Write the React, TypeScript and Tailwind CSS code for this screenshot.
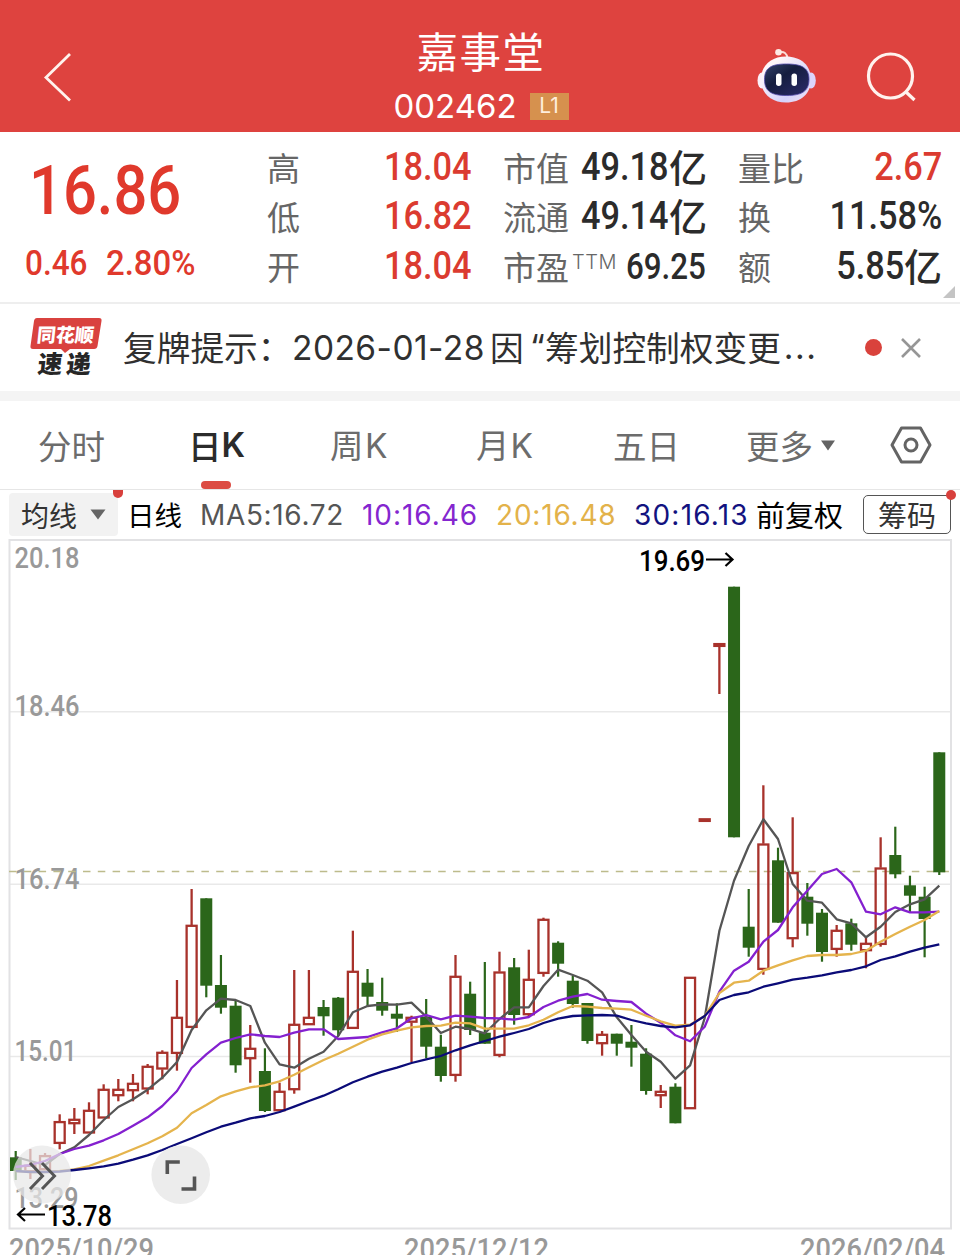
import React from 'react';

type Candle = {
  up: boolean;
  high: number;
  top: number;
  bottom: number;
  low: number;
};

const STEP = 14.66;
const FIRST_X = 15.7;
const cx = (i: number) => FIRST_X + i * STEP;

const c = (kind: 'u' | 'd', high: number, top: number, bottom: number, low: number): Candle => ({
  up: kind === 'u',
  high,
  top,
  bottom,
  low,
});

const candles: Candle[] = [
  c('d', 1151, 1157.3, 1171, 1180),
  c('u', 1149, 1165, 1172, 1179),
  c('u', 1153, 1155.3, 1170, 1170),
  c('u', 1114.3, 1121.3, 1143.7, 1149.3),
  c('u', 1108, 1119, 1124, 1134),
  c('u', 1102.3, 1110, 1133.3, 1133),
  c('u', 1084.3, 1089, 1118.3, 1118),
  c('u', 1079, 1089, 1096, 1101.3),
  c('u', 1074, 1083, 1091, 1101.3),
  c('u', 1064, 1066, 1089.3, 1094.3),
  c('u', 1050.3, 1052, 1069.3, 1079.3),
  c('u', 980, 1017, 1053.7, 1070.7),
  c('u', 889, 925, 1027.7, 1027),
  c('d', 898.3, 898.3, 985.7, 997.3),
  c('d', 955, 985, 1007.7, 1013.7),
  c('d', 1000, 1005.7, 1065.3, 1072.7),
  c('u', 1025, 1048, 1059, 1082.7),
  c('d', 1048.3, 1071, 1111, 1112),
  c('u', 1082.7, 1091, 1111, 1111),
  c('u', 970, 1024, 1090, 1093.7),
  c('u', 970, 1017, 1025, 1025),
  c('d', 1000, 1007, 1016.3, 1035.7),
  c('d', 997, 997.7, 1030.3, 1036),
  c('u', 930.7, 971, 1028.7, 1028),
  c('d', 969, 982.7, 996.7, 1006),
  c('d', 977.7, 1002, 1010.7, 1015.7),
  c('d', 1003.3, 1013.7, 1018.7, 1032),
  c('u', 1015.7, 1017, 1022.5, 1062),
  c('d', 999, 1016.7, 1046.7, 1058.3),
  c('d', 1034.7, 1046.7, 1076, 1081.7),
  c('u', 955, 976, 1075.7, 1081.7),
  c('d', 981.7, 993.7, 1030, 1035),
  c('d', 962, 1032.7, 1043.7, 1043.7),
  c('u', 951.7, 971.7, 1055.7, 1057.3),
  c('d', 958, 967.3, 1015, 1024.7),
  c('u', 949.7, 979, 1015, 1016),
  c('u', 917.7, 919, 973.7, 976.7),
  c('d', 941.3, 942.7, 963.7, 976.7),
  c('d', 976, 980.7, 1004, 1007.7),
  c('d', 1003, 1003, 1041, 1043.7),
  c('u', 1031, 1034, 1044, 1055.7),
  c('d', 1033.7, 1033.7, 1043.7, 1055.7),
  c('d', 1025, 1041.7, 1047.7, 1066.7),
  c('d', 1048.3, 1053.7, 1091, 1094.7),
  c('u', 1085, 1091, 1096, 1108),
  c('d', 1083.3, 1086.7, 1123.3, 1123.3),
  c('u', 977, 977, 1109, 1109),
  c('u', 818.5, 818.5, 821.7, 821.7),
  c('u', 644, 643.3, 646.7, 694),
  c('d', 586.7, 586.7, 837.3, 837.3),
  c('d', 889, 926.7, 947.7, 956.7),
  c('u', 785.3, 843.7, 969.7, 974.7),
  c('d', 847.7, 860.3, 922.7, 922.7),
  c('u', 817.3, 872.3, 939, 947.3),
  c('d', 883, 896.7, 923.7, 935.7),
  c('d', 909, 912.7, 952, 961.7),
  c('u', 925, 930, 949.7, 956.7),
  c('d', 918.7, 923.3, 944.7, 950.7),
  c('u', 936.7, 943, 951, 968.3),
  c('u', 837.3, 867.7, 944.7, 946.7),
  c('d', 826.7, 855, 874.3, 878.3),
  c('d', 875.7, 885.3, 895.7, 912),
  c('d', 886.7, 896.7, 919, 957.3),
  c('d', 752.3, 752.3, 872.3, 875),
];

const ma5 = [
  1157, 1161, 1165, 1154, 1147.3, 1135, 1120, 1107, 1099.3, 1089.7, 1077.7, 1062, 1030, 1010.3, 998.7, 1000,
  1006, 1042.7, 1064.3, 1067.7, 1058.7, 1051.7, 1036, 1012.3, 1006, 1004.3, 1004.7, 1002.7, 1016.7, 1033,
  1026.7, 1029, 1033.3, 1019, 1007.3, 1007.3, 986, 969.7, 975, 980.7, 992.3, 1017.3, 1035, 1051.7, 1061.7,
  1078.7, 1065.3, 1018, 930.7, 880.7, 846, 819.3, 839, 884, 900.7, 902.7, 919.3, 923.3, 937.3, 926.7, 912,
  904.3, 899.3, 885.7,
];

const ma10 = [
  1167, 1165, 1161, 1154, 1149, 1145.7, 1140.3, 1134, 1125.7, 1117.3, 1106, 1091, 1068, 1054.3, 1042.7, 1038,
  1034.3, 1036, 1037, 1032.7, 1029.3, 1029.3, 1039, 1038, 1037, 1032.3, 1028.3, 1018.3, 1015, 1019.3, 1015.7,
  1016.7, 1018, 1018.3, 1019.7, 1017, 1007, 1000.7, 996.7, 994, 999.7, 1001, 1002, 1013.7, 1022.7, 1035.3,
  1041.3, 1026.7, 991.7, 970.7, 961.7, 941.7, 930, 907.3, 890.7, 874, 869, 882.3, 911.7, 914.3, 907.3, 912.3,
  912.3, 911.7,
];

const ma20 = [
  1171, 1172, 1172, 1171, 1169.3, 1166, 1160.7, 1155.3, 1149.3, 1143.3, 1136.3, 1127.7, 1113.3, 1105, 1096.3,
  1091.3, 1087.3, 1085.3, 1081.3, 1074.7, 1067.3, 1060, 1053.7, 1046.7, 1039.7, 1034.3, 1030.7, 1027.3, 1026,
  1025.7, 1022.7, 1023.3, 1028.7, 1028.7, 1028.7, 1025.3, 1019.7, 1012.3, 1006, 1006.7, 1008, 1008.7, 1009.7,
  1015.7, 1021.3, 1025.7, 1024.7, 1016, 993, 982.7, 980.7, 970.7, 965.3, 960.3, 956, 955, 955, 954, 950.7,
  941.7, 934, 926.7, 920, 911,
];

const ma30 = [
  1171, 1172, 1172, 1171.5, 1170, 1168.3, 1166.3, 1163.7, 1159.7, 1155.3, 1150, 1144, 1138.3, 1132.3, 1126.7,
  1122.7, 1118.3, 1116, 1112, 1106.7, 1101, 1095.7, 1089.3, 1082.3, 1076.7, 1071.7, 1067.7, 1063, 1059.3,
  1056, 1050.3, 1045.3, 1041, 1036.7, 1033, 1029, 1023, 1018.7, 1016, 1015.3, 1015, 1015.7, 1020, 1023.3, 1026,
  1027.3, 1025.3, 1016, 1000, 995, 992.3, 986.7, 983.3, 979.7, 977.7, 975.3, 972.3, 970, 966.3, 960, 956.3,
  951.7, 947.7, 944.3,
];

const lines = [
  { color: '#555555', data: ma5 },
  { color: '#8420cf', data: ma10 },
  { color: '#e5b44d', data: ma20 },
  { color: '#0b0b78', data: ma30 },
];

const toPoints = (data: number[]) => data.map((y, i) => `${cx(i).toFixed(1)},${y}`).join(' ');

function Header() {
  return (
    <header className="relative flex h-[132px] flex-col items-center bg-[#de433f] text-white">
      <svg className="absolute left-[42px] top-[50px]" width="32" height="54" fill="none" stroke="#fff3ee" strokeWidth="2.8">
        <path d="M28 4 4 27.5 28 50.500" />
      </svg>
      <h1 className="mt-[23px] h-[54px] pl-[2px] text-[41.500px] leading-[54px] tracking-[1.500px]">嘉事堂</h1>
      <div className="mt-[8px] flex h-[42px] items-center gap-[13px] pl-[2px]">
        <span className="font-[Inter] text-[33px] leading-[42px]">002462</span>
        <span className="flex h-[27px] w-[39px] items-center justify-center bg-[#d6914e] font-[Inter] text-[21px] text-[#ffeedd]">
          L1
        </span>
      </div>
      <svg className="absolute left-[755px] top-[46px]" width="64" height="60">
        <defs>
          <linearGradient id="shell" x1="0" y1="0" x2="1" y2="1">
            <stop offset="0.2" stopColor="#fff7fa" />
            <stop offset="0.7" stopColor="#d4d2fb" />
            <stop offset="1" stopColor="#f6e4f3" />
          </linearGradient>
          <linearGradient id="visor" x1="0" y1="0" x2="1" y2="1">
            <stop offset="0" stopColor="#34436a" />
            <stop offset="0.4" stopColor="#151d3f" />
            <stop offset="1" stopColor="#2c2b6b" />
          </linearGradient>
        </defs>
        <path d="M24 6.500c5-1.500 8 1 8.500 6" fill="none" stroke="#fbdcd8" strokeWidth="2" />
        <circle cx="23.500" cy="6.300" r="3.300" fill="#fde9e4" />
        <ellipse cx="7" cy="34.500" rx="4.500" ry="8" fill="#fbf0f8" />
        <ellipse cx="56" cy="34.500" rx="4.800" ry="8" fill="#dcd5fb" />
        <path d="M31 10.500c15 0 25 9 25 23S46 56.500 31 56.500 6 47.500 6 33.500s10-23 25-23Z" fill="url(#shell)" />
        <path
          d="M31.500 18c15.500 0 22.500 4 22.500 15.500S47 49.500 31.500 49.500 9.500 45 9.500 33.500 16 18 31.500 18Z"
          fill="url(#visor)"
          stroke="#5147a8"
          strokeWidth="0.8"
        />
        <rect x="21" y="27.500" width="5.500" height="12.500" rx="2.700" fill="#fff" />
        <rect x="36.500" y="27.500" width="5.500" height="12.500" rx="2.700" fill="#fff" />
      </svg>
      <svg className="absolute left-[864px] top-[50px]" width="54" height="54" fill="none" stroke="#fff3ee" strokeWidth="3.2">
        <circle cx="26.500" cy="26" r="22" />
        <path d="m41.500 41.500 9 8.500" />
      </svg>
    </header>
  );
}

function Quote() {
  return (
    <section className="relative flex h-[172px] border-b-2 border-[#eeeeee] pt-[11px] text-[33px] text-[#666]">
      <div className="w-[267px] font-[Roboto] font-medium text-[#e0392c]">
        <div className="ml-[29px] mt-[8px] h-[80px] origin-left scale-x-[.865] whitespace-nowrap text-[69px] leading-[80px]">
          16.86
        </div>
        <div className="mt-[13px] flex h-[40px] text-[35px] leading-[40px]">
          <span className="ml-[25px] w-[81px] origin-left scale-x-[.9]">0.46</span>
          <span className="origin-left scale-x-[.94]">2.80%</span>
        </div>
      </div>

      <div className="w-[204px]">
        <QuoteRow label="高" value="18.04" red />
        <QuoteRow label="低" value="16.82" red />
        <QuoteRow label="开" value="18.04" red />
      </div>
      <div className="ml-[32px] w-[204px]">
        <QuoteRow label="市值" value="49.18" unit="亿" />
        <QuoteRow label="流通" value="49.14" unit="亿" />
        <QuoteRow label="市盈" sup="TTM" value="69.25" small />
      </div>
      <div className="ml-[31px] w-[204px]">
        <QuoteRow label="量比" value="2.67" red />
        <QuoteRow label="换" value="11.58%" />
        <QuoteRow label="额" value="5.85" unit="亿" />
      </div>
      <svg className="absolute bottom-[4px] right-[5px]" width="12" height="12">
        <path d="M12 0v12H0Z" fill="#c4c4c4" />
      </svg>
    </section>
  );
}

type QuoteRowProps = {
  label: string;
  value: string;
  unit?: string;
  sup?: string;
  red?: boolean;
  small?: boolean;
};

function QuoteRow({ label, value, unit, sup, red, small }: QuoteRowProps) {
  return (
    <div className="flex h-[49.3px] items-center justify-between whitespace-nowrap leading-[49px]">
      <span className="flex">
        {label}
        {sup && <span className="-mt-[4px] ml-[3px] font-[Inter] text-[20px] font-light tracking-[0.5px]">{sup}</span>}
      </span>
      <span className={`flex items-center justify-end font-medium ${red ? 'text-[#db3b30]' : 'text-[#2b2b2b]'}`}>
        <span
          className={`origin-right font-[Roboto] ${small ? '-ml-[10px] mr-[1px] mt-[2px] scale-x-[.87] text-[36px]' : 'scale-x-[.88] text-[39px]'}`}
        >
          {value}
        </span>
        {unit && <span className="-mt-[4px] text-[38px]">{unit}</span>}
      </span>
    </div>
  );
}

function Notice() {
  return (
    <section className="flex h-[87px] items-center text-[33.7px] text-[#303030]">
      <div className="relative ml-[30px] h-[62px] w-[93px]">
        <svg className="absolute left-0 top-0" width="73" height="36">
          <path d="M7 1h62q3 0 2.500 3l-4 25q-.5 3-3.500 3H40l-5 4-4-4H3Q0 32 .5 29L4 4q.5-3 3-3Z" fill="#d9423f" />
        </svg>
        <span className="absolute left-[7px] top-[4px] -skew-x-6 whitespace-nowrap text-[19px] font-black leading-[26px] text-white">
          同花顺
        </span>
        <span className="absolute left-[8px] top-[32px] -skew-x-6 whitespace-nowrap text-[24.500px] font-black leading-[28px] tracking-[4px] text-[#262626]">
          速递
        </span>
      </div>
      <div className="flex w-[740px] items-center whitespace-nowrap">
        <span className="w-[169px]">复牌提示：</span>
        <span className="w-[198px] pt-[1px] font-[Inter] text-[33.500px] tracking-[0.45px]">2026-01-28</span>
        <span className="w-[40px]">因</span>
        <span className="w-[15px] font-[Inter]">“</span>
        <span>筹划控制权变更</span>
        <span className="ml-[3px] font-[Inter] tracking-[1.5px]">...</span>
      </div>
      <span className="ml-[2px] size-[17px] rounded-full bg-[#d9423c]" />
      <svg className="ml-[19px]" width="20" height="20" stroke="#969696" strokeWidth="2.600">
        <path d="m1 1 18 18M19 1 1 19" />
      </svg>
    </section>
  );
}

function Tabs() {
  return (
    <nav className="flex h-[89px] items-center border-b border-[#e6e6e6] pl-[38px] text-[33.500px] text-[#6c6c6c]">
      <span className="w-[150px]">分时</span>
      <span className="relative flex h-full w-[142px] items-center font-medium text-[#2b2b2b]">
        日<span className="font-[Inter] font-semibold">K</span>
        <span className="absolute bottom-0 left-[13px] h-[8px] w-[30px] rounded-full bg-[#dc4c43]" />
      </span>
      <span className="w-[146px]">
        周<span className="ml-[1.5px] font-[Inter]">K</span>
      </span>
      <span className="w-[137px]">
        月<span className="ml-[1px] font-[Inter]">K</span>
      </span>
      <span className="w-[133px]">五日</span>
      <span className="flex w-[144px] items-center">
        更多
        <svg className="ml-[7px]" width="16" height="11">
          <path d="M1 0.500h14L8 10.500Z" fill="#636363" />
        </svg>
      </span>
      <svg width="42" height="38" fill="none" stroke="#646464" strokeWidth="3">
        <path d="M11.500 2h19L40 19l-9.500 17h-19L2 19Z" strokeLinejoin="round" />
        <circle cx="21" cy="19" r="6" />
      </svg>
    </nav>
  );
}

function Indicators() {
  return (
    <div className="relative flex h-[49px] items-center overflow-visible whitespace-nowrap pl-[9px] text-[28px] text-black">
      <div className="flex h-[43px] w-[109px] items-center rounded-[4px] bg-[#f2f2f2] pl-[12px] text-[#333]">
        均线
        <svg className="ml-[13px]" width="16" height="11">
          <path d="M0.500 0.500h15L8 10.500Z" fill="#666" />
        </svg>
      </div>
      <span className="absolute left-[113px] top-0 h-[8px] w-[10px] rounded-b-full bg-[#d8403c]" />
      <span className="ml-[9px] w-[73px] text-[27.500px]">日线</span>
      <span className="w-[162px] pt-[1px] font-[Inter] tracking-[0.65px] text-[#555]">MA5:16.72</span>
      <span className="w-[134px] pt-[1px] font-[Inter] tracking-[0.95px] text-[#8426cf]">10:16.46</span>
      <span className="w-[138px] pt-[1px] font-[Inter] tracking-[0.8px] text-[#e3b24a]">20:16.48</span>
      <span className="w-[122px] pt-[1px] font-[Inter] tracking-[1.2px] text-[#12127f]">30:16.13</span>
      <span className="w-[107px] text-[29px]">前复权</span>
      <span className="flex h-[39px] w-[88px] items-center justify-center rounded-[5px] border border-[#555] text-[29px] text-[#333]">
        筹码
      </span>
      <span className="absolute right-[4px] top-0 size-[10px] rounded-full bg-[#d8403c]" />
    </div>
  );
}

function CandleMark({ candle, i }: { candle: Candle; i: number }) {
  const x = cx(i);
  const { up, high, top, bottom, low } = candle;
  if (!up) {
    return (
      <g fill="#2b661a">
        <rect x={x - 1.1} y={high} width={2.2} height={low - high} />
        <rect x={x - 6} y={top} width={12} height={bottom - top} />
      </g>
    );
  }
  return (
    <g stroke="#a8322b" strokeWidth={2.3} fill="none">
      {high < top && <line x1={x} x2={x} y1={high} y2={top} />}
      {low > bottom && <line x1={x} x2={x} y1={bottom} y2={low} />}
      <rect x={x - 5} y={top + 0.8} width={10} height={bottom - top - 1.6} />
    </g>
  );
}

function Chart() {
  const axis = [
    { y: 568, w: 65, text: '20.18' },
    { y: 716, w: 65, text: '18.46' },
    { y: 888.5, w: 65, text: '16.74' },
    { y: 1060.5, w: 62, text: '15.01' },
    { y: 1208, w: 64, text: '13.29' },
  ];
  return (
    <svg className="block" width="960" height="716" viewBox="0 539 960 716" fontFamily="Roboto, sans-serif">
      <clipPath id="plot">
        <rect x="10" y="540" width="941" height="689" />
      </clipPath>
      <g stroke="#e9e9e9" strokeWidth="1.5">
        <path d="M9 711.7H951M9 884.300H951M9 1056.500H951" />
      </g>
      <rect x="9.500" y="540" width="941.500" height="688.500" fill="none" stroke="#e2e2e4" strokeWidth="2" />
      <g fill="#999" fontSize="29.500" fontWeight="500">
        {axis.map((a) => (
          <text key={a.text} x="14.500" y={a.y} textLength={a.w} lengthAdjust="spacingAndGlyphs">
            {a.text}
          </text>
        ))}
        <text x="9" y="1259" textLength="145" lengthAdjust="spacingAndGlyphs">2025/10/29</text>
        <text x="404" y="1259" textLength="145" lengthAdjust="spacingAndGlyphs">2025/12/12</text>
        <text x="800" y="1259" textLength="145" lengthAdjust="spacingAndGlyphs">2026/02/04</text>
      </g>
      <path d="M9 871.500H951" stroke="#bdbb8c" strokeWidth="1.300" strokeDasharray="7.500 7.300" />
      <g clipPath="url(#plot)">
        {candles.map((candle, i) => (
          <CandleMark key={i} candle={candle} i={i} />
        ))}
        {lines.map((line) => (
          <polyline
            key={line.color}
            points={toPoints(line.data)}
            fill="none"
            stroke={line.color}
            strokeWidth="2.300"
            strokeLinejoin="round"
          />
        ))}
      </g>
      <circle cx="42" cy="1174.500" r="29" fill="#e8e8e8" fillOpacity="0.720" />
      <circle cx="180.700" cy="1174.800" r="29.300" fill="#ebebeb" fillOpacity="0.950" />
      <g fill="#000" fontSize="29.500" fontWeight="500">
        <text x="639" y="570.500" textLength="66" lengthAdjust="spacingAndGlyphs">19.69</text>
        <text x="47" y="1225.500" textLength="65" lengthAdjust="spacingAndGlyphs">13.78</text>
      </g>
      <g fill="none" stroke="#000" strokeWidth="2.200">
        <path d="M706 559.500h26M725.500 553l7 6.500-7 6.500" />
        <path d="M45 1214.500H18.500M25 1208l-7 6.500 7 6.500" />
      </g>
      <g fill="none" stroke="#555" strokeWidth="3">
        <path d="m30 1163 12.500 13-12.500 13M42 1163l12.500 13-12.500 13" />
        <path d="M167.300 1174v-12h12.500M194.500 1176.500v12.500h-13" strokeWidth="3.600" />
      </g>
    </svg>
  );
}

export default function App() {
  return (
    <div className="h-[1255px] w-[960px] overflow-hidden bg-white font-['Noto_Sans_CJK_SC',sans-serif]">
      <Header />
      <Quote />
      <Notice />
      <div className="h-[10px] bg-[#f4f4f4]" />
      <Tabs />
      <Indicators />
      <Chart />
    </div>
  );
}
